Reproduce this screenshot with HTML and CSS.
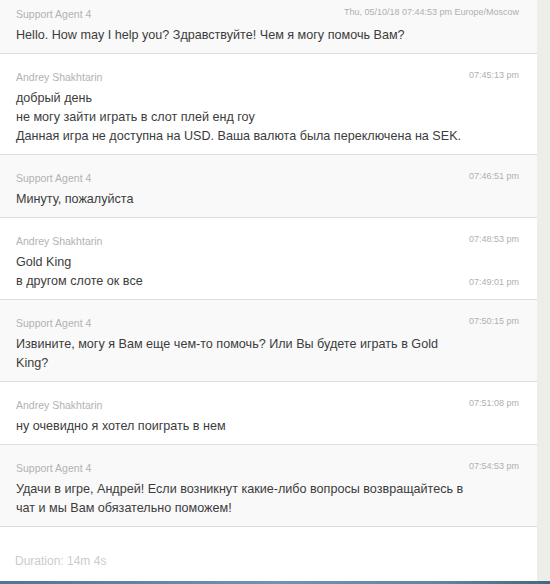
FILE: index.html
```html
<!DOCTYPE html>
<html>
<head>
<meta charset="utf-8">
<link rel="stylesheet" href="styles.css">
</head>
<body>
<div class="screen">
  <div class="chat">
    <div class="row agent first">
      <div class="head"><span class="name">Support Agent 4</span><span class="ts">Thu, 05/10/18 07:44:53 pm Europe/Moscow</span></div>
      <div class="msg">Hello. How may I help you? Здравствуйте! Чем я могу помочь Вам?</div>
    </div>
    <div class="row user">
      <div class="head"><span class="name">Andrey Shakhtarin</span><span class="ts">07:45:13 pm</span></div>
      <div class="msg">добрый день</div>
      <div class="msg">не могу зайти играть в слот плей енд гоу</div>
      <div class="msg">Данная игра не доступна на USD. Ваша валюта была переключена на SEK.</div>
    </div>
    <div class="row agent">
      <div class="head"><span class="name">Support Agent 4</span><span class="ts">07:46:51 pm</span></div>
      <div class="msg">Минуту, пожалуйста</div>
    </div>
    <div class="row user">
      <div class="head"><span class="name">Andrey Shakhtarin</span><span class="ts">07:48:53 pm</span></div>
      <div class="msg">Gold King</div>
      <div class="msg line"><span>в другом слоте ок все</span><span class="ts">07:49:01 pm</span></div>
    </div>
    <div class="row agent">
      <div class="head"><span class="name">Support Agent 4</span><span class="ts">07:50:15 pm</span></div>
      <div class="msg">Извините, могу я Вам еще чем-то помочь? Или Вы будете играть в Gold King?</div>
    </div>
    <div class="row user">
      <div class="head"><span class="name">Andrey Shakhtarin</span><span class="ts">07:51:08 pm</span></div>
      <div class="msg">ну очевидно я хотел поиграть в нем</div>
    </div>
    <div class="row agent">
      <div class="head"><span class="name">Support Agent 4</span><span class="ts">07:54:53 pm</span></div>
      <div class="msg">Удачи в игре, Андрей! Если возникнут какие-либо вопросы возвращайтесь в чат и мы Вам обязательно поможем!</div>
    </div>
    <div class="footer">Duration: 14m 4s</div>
  </div>
  <div class="side"></div>
</div>
<div class="bar"></div>
</body>
</html>
```
FILE: styles.css
```css
html, body {
  margin: 0;
  padding: 0;
  height: 100%;
  overflow: hidden;
  background: #ffffff;
  font-family: "Liberation Sans", Arial, sans-serif;
}
.screen {
  display: flex;
  height: 581px;
}
.chat {
  width: 537px;
  display: flex;
  flex-direction: column;
  background: #ffffff;
}
.side {
  flex: 1;
  background: #eeeee9;
}
.row {
  padding: 14px 18px 8px 16px;
  border-bottom: 1px solid #dedede;
}
.row.first {
  padding-top: 5px;
}
.agent {
  background: #f9f9f9;
}
.user {
  background: #ffffff;
}
.head {
  display: flex;
  justify-content: space-between;
  align-items: flex-start;
  height: 18px;
  margin-bottom: 3px;
}
.name {
  font-size: 10.5px;
  line-height: 18px;
  color: #b2b2b2;
}
.ts {
  font-size: 9px;
  line-height: 14px;
  color: #b0b0b0;
}
.msg {
  font-size: 12.6px;
  line-height: 19px;
  color: #3c3c3c;
  padding-right: 50px;
}
.msg.line {
  display: flex;
  justify-content: space-between;
  align-items: center;
  padding-right: 0;
}
.footer {
  padding: 27px 15px 0;
  font-size: 12px;
  line-height: 14px;
  color: #cccccc;
}
.bar {
  height: 3px;
  background: linear-gradient(90deg, #4b7892 0%, #6a97b0 50%, #5a889f 80%, #3f6b80 100%);
}
```
